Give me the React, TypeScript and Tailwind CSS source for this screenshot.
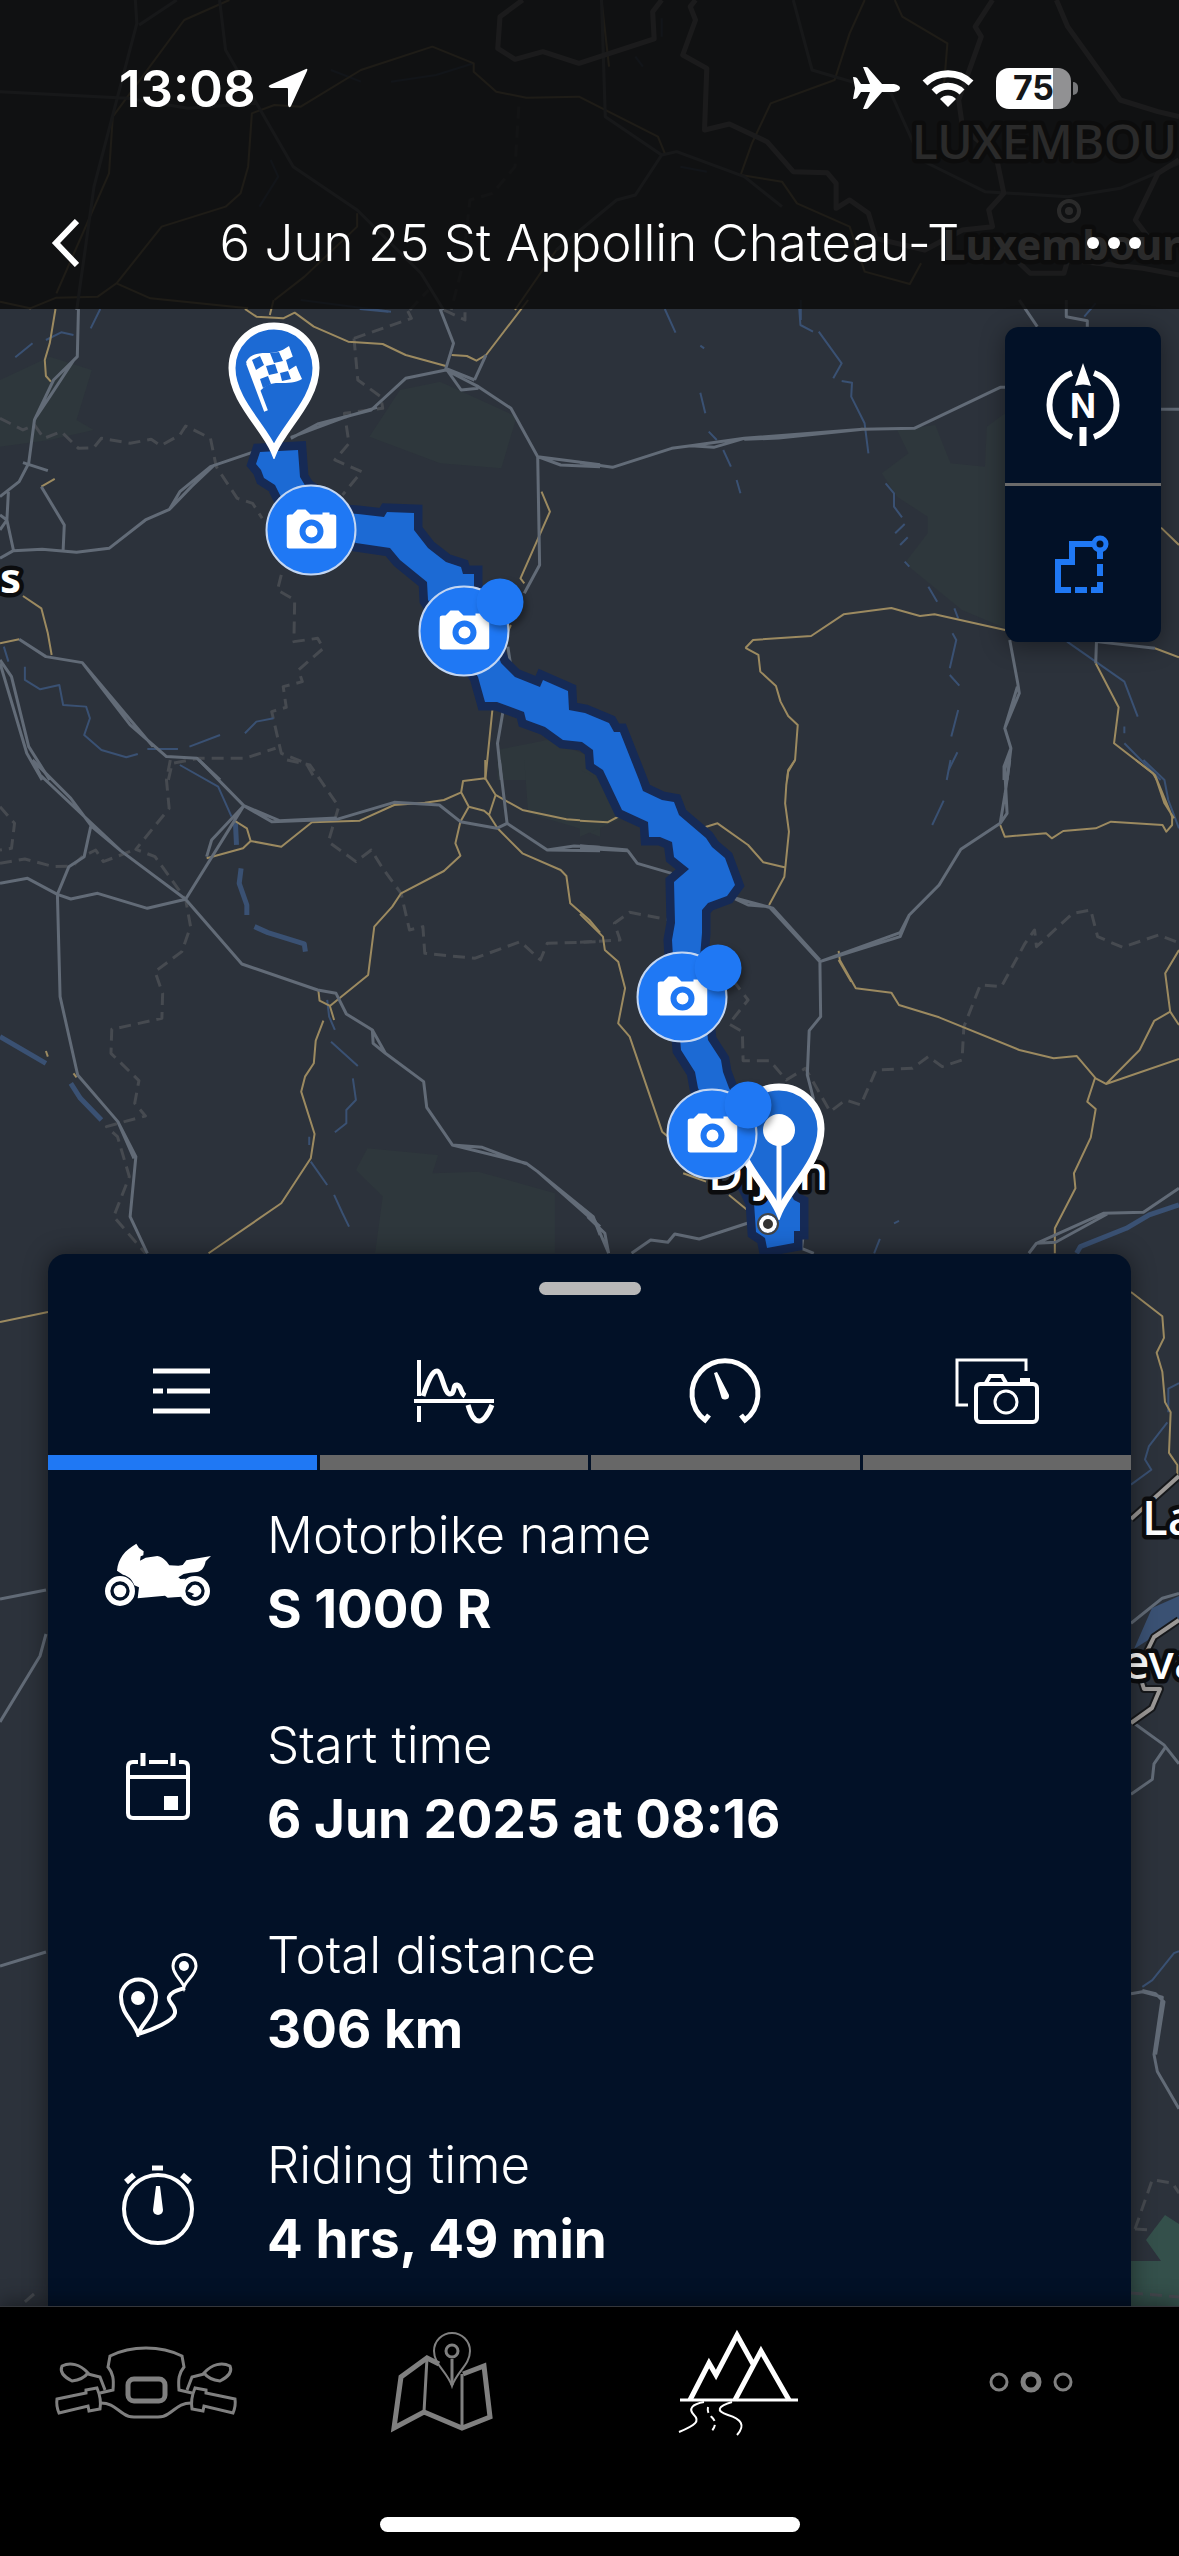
import { useState } from "react";
import type { ReactNode } from "react";

interface ITile {
  transform: string;
  woods?: string;
  rivers?: string;
  wideRivers?: string;
  borders?: string;
  roads?: string;
  nationals?: string;
  frontiers?: string;
}

// every tile keeps its own coordinate space, placed by its transform
const tiles: ITile[] = [
  {
    transform: "scale(0.7519 0.3333)",
    rivers:
      "M360 480 370 530 345 620M440 210 480 245M520 245 580 225 630 190M845 170 855 200M905 500 940 515M400 900 520 935M1065 900V960M880 55V110",
    borders: "M690 320 685 500 655 580 625 600 615 800 600 930M545 930 570 870",
    roads:
      "M180 0 182 70 125 560 102 930M292 0 300 150 390 500 475 630 560 820 590 930M0 275 170 295 250 325 340 310M235 0 185 75M1055 0 1080 210 1185 280 1225 480 1310 575 1420 590 1490 565 1568 490M800 0 805 350 880 465 845 585 820 600 740 750M880 465 900 455 990 530 1040 620",
    nationals:
      "M305 0 245 60 150 350 145 520 75 880M0 905 40 925 75 893 130 890 155 850 215 680 300 620 320 580 330 500 335 340 365 315 400 320 480 210 575 140 630 190 630 215 660 275 700 293 770 290 875 410 885 465M155 850 200 895 330 925M800 0 810 200M1150 0 1130 100 1110 240 1025 310 1000 430 985 525 1040 545 1060 610 1130 680 1150 815 1210 852 1225 790M1190 0 1200 50 1260 130 1255 270M740 750 685 930M405 830 365 900M475 640 475 680 405 830",
    frontiers:
      "M695 0 665 50 662 145 685 178 722 155 770 190 870 117 868 35 880 0M925 0 918 20 925 60 908 165 940 205 937 390 970 372 1020 425 1055 515 1100 518 1112 550 1112 625 1130 600 1155 640 1165 715 1230 750 1280 690 1320 680 1315 630 1335 580 1325 470 1280 380 1275 300 1305 110 1297 80 1320 0M1405 0 1420 80 1490 300 1540 335 1568 350M1568 480 1540 520 1510 660 1540 750M1340 755 1370 820 1415 820 1420 780 1520 805 1568 825",
  },
  {
    transform: "translate(0 300) scale(0.3827 0.3333)",
    woods:
      "M130 170 240 210 200 360 245 390 130 420 0 440V240ZM1045 270 1150 245 1350 350 1310 505 1150 490 965 410ZM1300 1350 1430 1320 1568 1380V1440H1300Z",
    rivers:
      "M262 27 237 85M85 130 40 172M120 120 160 97 192 105M940 27 1015 35M10 1040 22 1085M65 1100 65 1140 105 1168 155 1155 165 1215 225 1220 235 1255 220 1305 265 1350 330 1372 360 1362M385 1347 465 1347M495 1340 575 1305M640 1300 670 1265 715 1255",
    borders:
      "M0 355 60 390 90 375 115 415 160 395 205 445 245 443 265 415 340 430 395 418 420 437 470 405 485 378 550 415 565 500 620 595 660 610 685 655M735 825 725 870 770 900 768 1025 830 1015 845 1045 780 1110 790 1145 740 1160 748 1222 710 1235 735 1360 800 1390 825 1440M925 115 1075 55 1060 20M1160 30 1215 60V20M925 115 935 240 995 290 1000 325 900 340 912 430 875 480 945 515 895 585M440 1440 450 1390 520 1375 640 1375 720 1345",
    roads:
      "M205 27 202 170 140 240 90 360 75 490 50 545 0 590M193 180 130 290 95 350M60 488 125 512M108 560 168 675 165 750M0 775 35 752 110 748 200 757 285 745 380 660 443 628 470 575 550 500 665 455M443 628 500 560 560 495M760 415 830 372 970 330 1060 235 1165 210 1250 260 1335 325 1405 470 1410 795 1370 880M760 412 900 352 985 322M1150 27 1185 130 1165 205 1205 270 1250 265M1405 470 1465 495 1568 500M1405 470 1568 494M1240 240 1270 165M1165 205 1240 240M22 575 18 660 35 750M0 645 18 660 0 690M1327 1040 1335 1100M1315 1230 1300 1330 1310 1440M0 1080 30 1130 75 1340 130 1440M0 1090 70 1360 110 1440M50 1018 120 1070 215 1088 340 1275 435 1370 515 1375 575 1440M215 1088 330 1245 400 1340",
    nationals:
      "M145 27 130 130 117 180 120 228 133 245M640 27 670 50 740 55 770 38 820 80 910 125 1000 132 1060 165 1165 198M715 0 705 45M1380 0 1270 165 1245 182 1220 168 1180 165M143 537 108 560M60 888 108 925 125 1000 135 1065M0 1030 50 1018M1415 575 1437 635 1360 835 1370 850M1335 975 1325 1000M1287 1225 1268 1440",
  },
  {
    transform: "translate(580 300) scale(0.382 0.3333)",
    woods:
      "M790 520 860 460 830 390 930 375 970 490 1060 500 1065 380 1113 340V985L1000 930 850 790 910 700 910 650 830 590Z",
    rivers:
      "M222 27 250 98M574 27 577 75 610 95M625 95 685 190 663 235M685 243 712 248 710 290 745 370 755 460M315 278 328 340M337 395 358 420M375 450 395 500M410 540 420 580M800 550 822 580 822 620 843 652M850 672 825 700M858 712 838 735M850 785 862 800M912 860 935 905M980 925 990 955M975 1000 985 1020 968 1105M968 1125 993 1157M990 1230 972 1310M988 1357 965 1410M1275 1025 1425 1145 1460 1250M1425 1280V1300M1425 1330 1520 1440M1350 10 1320 50M315 137 325 145",
    roads:
      "M0 488 85 502 240 445 290 437 430 415 740 388 875 385 1100 262 1113 262M290 437 350 442 430 415M430 418 520 414 740 388M1150 0 1197 80M1273 0 1273 50 1328 62 1328 80M1521 328H1568M1125 1020 1146 1150 1150 1180 1112 1285 1128 1345 1118 1440M1145 1160 1112 1285M1128 1345 1110 1400V1440M1352 1025 1350 1090M1352 1025 1505 1045",
    nationals:
      "M433 1044 453 1020 605 1008 690 943 815 924 890 948 928 943 1113 990M433 1044 467 1065 472 1115 513 1158 525 1205 545 1248 570 1275 563 1380 545 1410 542 1440M1350 1090 1410 1222 1398 1330 1500 1420 1510 1440M1505 1045 1568 1072M1521 683 1568 735",
  },
  {
    transform: "translate(0 760) scale(0.3827 0.3333)",
    woods:
      "M960 1165 1145 1185 1130 1240 1250 1235 1450 1300V1480H980L1000 1310 930 1230ZM1370 0H1568V230L1500 200 1380 160Z",
    rivers:
      "M470 15 570 80 605 170M855 720 860 770 875 810M865 845 935 918M922 955 930 1020 905 1050 905 1090 875 1117M808 1130V1155M812 1205 855 1275M873 1305 895 1360 912 1400",
    wideRivers:
      "M615 185 618 255M630 325 625 370 645 435 645 465M665 500 700 518 795 552 798 575M0 830 120 910M185 970 210 1015 265 1080",
    borders:
      "M445 0 435 60 442 145 355 268 405 290 485 418 498 500 475 575 405 635 425 700 423 775 292 808 290 880 363 962 352 1030 380 1068 278 1100 307 1130 338 1250 297 1370 380 1480M0 310 65 297 140 320 190 318 215 290 250 270 270 305 350 270M0 140 38 190 30 265 0 270M750 0 810 15 885 140 858 245 930 305 970 270 1000 325 1048 400 1070 510 1105 500 1110 580 1240 595 1360 545 1412 600 1430 550 1568 545",
    roads:
      "M85 0 105 45 315 272 485 418 632 612 830 690 878 700 905 762 973 810 975 850 1007 880 1107 965 1115 1042 1182 1155 1375 1210 1405 1235 1550 1370 1568 1425M85 0 185 115 240 200 315 272M973 810 1007 880M1405 1235 1568 1400M1182 1155 1260 1162 1375 1212M520 0 637 137 710 185 880 178 1030 127 1148 135 1203 185 1298 205 1325 190 1430 270 1568 272M637 137 730 182 880 174M1430 270 1500 258 1568 262M1305 0 1325 190M637 137 485 418M637 137 553 240 540 290M485 418 385 445 255 400 185 417 150 403 72 355 0 370M150 403 180 320 220 290 237 200M150 403 157 710 203 945 308 1085 355 1190 340 1370 385 1480M308 1085 350 1195",
    nationals:
      "M1268 0 1268 55 1210 63 1205 97 1225 140 1265 152 1278 165 1300 205 1365 280 1465 330 1480 348 1490 430 1540 480 1568 518M1268 55 1295 105 1278 165M1295 105 1365 150 1480 178 1568 185M1205 97 1160 120 1110 128 1030 135 940 182 815 187 735 260 655 243 635 265 540 295M610 180 645 205 655 243M1225 140 1203 185 1190 250 1203 287 1160 333 1048 400 1025 440 978 500 962 645 862 738 835 722 832 692M862 738 873 780M845 782 825 842 820 910 797 950 787 995 822 1122 812 1195 735 1330 545 1480M120 873 125 890M192 940 200 952",
  },
  {
    transform: "translate(580 760) scale(0.382 0.3333)",
    woods: "M0 30 60 60 120 170 0 230Z",
    rivers:
      "M970 0 960 60M952 122 922 195M1475 0 1530 60 1540 120 1568 205M785 1437 770 1480M835 1383 822 1390",
    wideRivers: "M1568 1335 1490 1365 1430 1405 1310 1460 1300 1480",
    borders:
      "M0 547 105 540 90 490 130 457 235 480M400 660 440 720 390 792 425 815 427 902 497 902 540 960 590 925 655 1055 695 1020 735 1035 775 930 870 925 912 890 948 920 1000 900 1005 800 1048 675 1103 680 1165 550 1190 510 1195 560 1290 460 1337 450 1355 530 1420 562 1515 525 1560 545",
    roads:
      "M0 265 125 272 150 310 240 340M0 257 125 270M398 412 440 435 495 440 628 605 630 770 600 812 595 945 612 1020M398 412 505 445 628 600M628 605 838 530 862 465 940 375 997 268 1100 190 1118 160 1112 30 1118 0M628 605 838 518 862 465M1100 190 1113 100 1125 0M1175 1480 1195 1450 1370 1360 1475 1357 1568 1285M1195 1450 1245 1447 1380 1362M135 1480 185 1440 230 1447 248 1422 312 1437 438 1390M0 1340 40 1385 75 1480M20 1370 65 1420 75 1480M585 1420 580 1465 612 1480",
    nationals:
      "M563 0 545 35 540 75 537 130 547 215 535 350 495 435M318 205 360 190 440 255 480 307 535 322M0 182 72 187 108 165M1455 0 1505 45 1550 170 1550 195 1535 215 1525 195 1390 185 1350 205 1265 213 1235 235 1220 220 1112 230 1100 195M1505 45 1530 130 1555 175M677 573 680 600 722 685 815 698 835 735 940 772 1150 870 1240 895 1300 888 1350 955 1377 972 1568 897M677 600 710 665M1377 972 1465 870 1503 783 1545 755 1532 640 1568 570M1545 755 1568 795M1348 955 1328 1025 1350 1047 1337 1133 1293 1240 1297 1285 1243 1405 1243 1480M0 462 60 530 65 570 100 605 118 685 100 790 130 830 215 1115 235 1135M270 1240 330 1265M390 1305 438 1350",
  },
  {
    transform: "translate(1099 1250) scale(0.3333 0.6761)",
    rivers:
      "M240 197 208 205 208 240M205 255 150 290 138 310 157 325 96 347M130 1090 160 1080 225 1040 240 1037",
    borders:
      "M108 1448 160 1375 220 1380 240 1395M108 1448 225 1452 240 1475",
    roads:
      "M96 552 190 515 240 508M105 700 195 732 240 760M200 735 165 760 160 783 96 805M96 1100 130 1097 190 1105 165 1190 175 1215 240 1270M130 1095 170 1100 195 1112 170 1190",
    nationals:
      "M96 62 190 98 195 130 173 152 190 180 198 225 215 240 210 300 235 318 235 335",
  },
  {
    transform: "translate(0 1254)",
    borders: "M34 1040 20 1052",
    roads: "M0 345 46 336M0 468 40 402 46 380M0 712 46 698",
    nationals: "M0 68 48 58",
  },
];

const routePath =
  "M260 452 298 450 300 477 306 487 344 513 358 514 384 517 387 512 414 513 414 530 428 548 446 562 461 567 463 574 474 574 474 587 501 663 515 677 540 687 543 680 568 691 569 710 585 713 609 723 614 732 620 732 639 780 643 791 662 800 674 802 679 815 706 838 712 847 725 858 735 885 727 896 708 903 702 910 702 933 700 957 708 1040 721 1060 723 1072 729 1088 794 1200 800 1203 800 1231 794 1231 794 1243 767 1248 765 1238 756 1232 754 1203 748 1190 698 1088 695 1072 681 1050 673 957 672 940 675 923 674 882 689 869 674 857 672 842 660 837 649 837 648 822 622 810 603 770 594 764 593 750 582 742 563 740 545 727 526 720 524 712 497 702 485 702 478 677 428 600 427 582 400 560 390 548 356 543 281 497 275 485 264 478 261 470 256 464Z";

const photos = [
  { id: 1, x: 311, y: 530, group: false },
  { id: 2, x: 464, y: 631, group: true },
  { id: 3, x: 682, y: 997, group: true },
  { id: 4, x: 712, y: 1134, group: true },
];

const place = (x: number, y: number) => ({
  left: `${(x / 1179) * 100}%`,
  top: `${(y / 2556) * 100}%`,
});

const Tile = ({ tile }: { tile: ITile }) => (
  <g transform={tile.transform} fill="none" strokeLinejoin="round">
    <path d={tile.woods} fill="#2e373c" />
    <path d={tile.borders} stroke="#464a50" strokeWidth="3" strokeDasharray="12 7" vectorEffect="non-scaling-stroke" />
    <path d={tile.rivers} stroke="#3a5173" strokeWidth="2" vectorEffect="non-scaling-stroke" />
    <path d={tile.wideRivers} stroke="#3a5173" strokeWidth="5" vectorEffect="non-scaling-stroke" />
    <path d={tile.nationals} stroke="#9c8a60" strokeWidth="2" vectorEffect="non-scaling-stroke" />
    <path d={tile.roads} stroke="#626b77" strokeWidth="3" vectorEffect="non-scaling-stroke" />
    <path d={tile.frontiers} stroke="#85868a" strokeWidth="5" vectorEffect="non-scaling-stroke" />
  </g>
);

const MapView = () => (
  <div className="absolute inset-0 overflow-hidden bg-[#2c323b]">
    <svg
      className="h-full w-full"
      viewBox="0 0 1179 2556"
      preserveAspectRatio="xMidYMid slice"
      aria-label="Map of the ride"
    >
      {tiles.map((tile, i) => (
        <Tile key={i} tile={tile} />
      ))}

      {/* lake and motorways near Geneva */}
      <path d="M1134 1649 1152 1608 1179 1596V1625L1156 1635Z" fill="#3a5173" />
      <path d="M1131 2261H1161L1146 2240 1165 2215 1179 2224V2306H1131Z" fill="#34504b" />
      <path d="M1131 2293 1179 2297" stroke="#464a50" strokeWidth="3" strokeDasharray="12 7" />
      <g fill="none" strokeLinejoin="round">
        <path d="M1131 1519 1179 1476M1179 1620 1154 1637 1138 1670 1144 1689H1160L1152 1708 1131 1723" stroke="#16181b" strokeWidth="8" />
        <path d="M1131 1519 1179 1476M1179 1620 1154 1637 1138 1670 1144 1689H1160L1152 1708 1131 1723" stroke="#9b9896" strokeWidth="4" />
      </g>

      <path d={routePath} fill="#162a55" stroke="#162a55" strokeWidth="17" />
      <path d={routePath} fill="#1c6ad4" />

      <circle cx="1069" cy="211" r="10" fill="none" stroke="#fff" strokeWidth="4" />
      <circle cx="1069" cy="211" r="4" fill="#fff" />
      <circle cx="768" cy="1224" r="7" fill="#333" stroke="#fff" strokeWidth="4" />
      <circle cx="768" cy="1224" r="10" fill="none" stroke="#444" strokeWidth="2" />

      <g
        className="font-['Noto_Sans',sans-serif] text-[48px] font-medium"
        fill="#fff"
        stroke="#0b0c0e"
        strokeWidth="9"
        strokeLinejoin="round"
        paintOrder="stroke"
      >
        <text x="912" y="159">LUXEMBOU</text>
        <text x="942" y="260" className="text-[42px] font-bold">Luxembourg</text>
        <text x="0" y="593" className="text-[42px] font-bold">s</text>
        <text x="708" y="1190">Dijon</text>
        <text x="1142" y="1535">La</text>
        <text x="1122" y="1679">eva</text>
      </g>
    </svg>

    <svg
      className="absolute h-[137px] w-[92px] -translate-x-1/2 -translate-y-full"
      style={place(274, 459)}
      viewBox="0 0 92 137"
      aria-label="Finish"
    >
      <path d="M46 129C36 105 4 78 4 46a42 42 0 0 1 84 0C88 78 56 105 46 129Z" fill="#1c6ad4" stroke="#fff" strokeWidth="7" />
      <path d="M20 41 38 89" stroke="#fff" strokeWidth="4" />
      <path d="M18 40C22 33 28 31 38 31S52 30 61 24C65 35 69 47 74 57 68 61 60 61 51 61S38 63 32 69Z" fill="#fff" />
      <path d="M24 38 32 34 36 43 28 48ZM42 31 51 30 55 39 46 41ZM38 44 47 42 50 51 41 53ZM58 38 66 34 69 43 61 48ZM52 51 60 49 63 57 54 59ZM32 57 40 54 43 62 35 66Z" fill="#1c6ad4" />
    </svg>
    <svg
      className="absolute h-[137px] w-[92px] -translate-x-1/2 -translate-y-full"
      style={place(779, 1220)}
      viewBox="0 0 92 137"
      aria-label="Start"
    >
      <path d="M46 129C36 105 4 78 4 46a42 42 0 0 1 84 0C88 78 56 105 46 129Z" fill="#1c6ad4" stroke="#fff" strokeWidth="7" />
      <circle cx="46" cy="47" r="16" fill="#fff" />
      <path d="M46 47V128" stroke="#fff" strokeWidth="5" />
    </svg>

    {photos.map((photo) => (
      <button
        key={photo.id}
        aria-label={`Photos ${photo.id}`}
        className="absolute flex h-[91px] w-[91px] -translate-x-1/2 -translate-y-1/2 items-center justify-center rounded-full border-2 border-[#c3d6f2] bg-[#1f78f4]"
        style={place(photo.x, photo.y)}
      >
        <svg className="h-[50px] w-[50px]" viewBox="0 0 50 50">
          <path d="M3 9H6L11 4H19L24 9H36V7H43V9H47Q50 9 50 12V40Q50 43 47 43H3Q0 43 0 40V12Q0 9 3 9Z" fill="#fff" />
          <circle cx="25" cy="26" r="9" fill="#fff" stroke="#1f78f4" strokeWidth="6" />
        </svg>
        {photo.group && (
          <span className="absolute -top-[9px] left-[56px] h-[47px] w-[47px] rounded-full bg-[#1f78f4] shadow-[3px_4px_6px_rgba(0,0,0,0.35)]" />
        )}
      </button>
    ))}
  </div>
);

const StatusBar = () => (
  <div className="flex h-[176px] items-center justify-between pr-[101px] pl-[119px]">
    <div className="flex items-center gap-3">
      <span className="text-[51px] leading-none font-semibold">13:08</span>
      <svg className="h-10 w-10" viewBox="0 0 40 40" fill="#fff">
        <path d="M38 1Q40 0 39 3L23 38Q21 41 20 37V21Q20 20 19 20H3Q-1 19 2 17Z" />
      </svg>
    </div>
    <div className="flex items-center gap-[22px]">
      <svg className="h-[42px] w-12" viewBox="0 0 48 42" fill="#fff">
        <path d="M42 17C46 18 48 19 48 21S46 24 42 25H30L17 40Q16 42 14 42H11L18 25H9L5 31Q4 32 1 32L3 21 1 10Q4 10 5 11L9 17H18L11 0H14Q16 0 17 2L30 17Z" />
      </svg>
      <svg className="h-[38px] w-[52px]" viewBox="0 0 52 38" fill="none" stroke="#fff" strokeWidth="7">
        <path d="M3 14A33 33 0 0 1 49 14" />
        <path d="M12 23A20 20 0 0 1 40 23" />
        <path d="M26 38 18 30A11 11 0 0 1 34 30Z" fill="#fff" stroke="none" />
      </svg>
      <div className="flex items-center gap-[2px]">
        <div className="flex h-[41px] w-[75px] items-center justify-center rounded-[13px] bg-linear-to-r from-white from-76% to-[#919193] to-76% text-[34px] leading-none font-bold text-[#151618]">
          75
        </div>
        <span className="h-[13px] w-[5px] rounded-r-full bg-[#77787a]" />
      </div>
    </div>
  </div>
);

const MapControls = () => (
  <div className="flex w-[156px] flex-col overflow-hidden rounded-[14px] bg-[#021127] shadow-[0_4px_24px_rgba(0,0,0,0.4)]">
    <button className="flex h-[156px] items-center justify-center" aria-label="North up">
      <svg className="h-[90px] w-[90px]" viewBox="-45 -45 90 90">
        <path d="M-11 -32A34 34 0 0 0 -11 32M11 -32A34 34 0 0 1 11 32" fill="none" stroke="#fff" strokeWidth="6" />
        <path d="M0 -42 8 -19Q0 -22 -8 -19Z" fill="#fff" />
        <path d="M0 22V41" stroke="#fff" strokeWidth="7" />
        <text x="0" y="13" textAnchor="middle" className="text-[34px] font-bold" fill="#fff">
          N
        </text>
      </svg>
    </button>
    <hr className="border-t-3 border-[#6a6a6a]" />
    <button className="flex h-[156px] items-center justify-center" aria-label="Fit route">
      <svg className="h-[90px] w-[90px]" viewBox="-45 -45 90 90" fill="none" stroke="#1f78f4" strokeWidth="6">
        <circle cx="17" cy="-20" r="6" strokeWidth="5" />
        <path d="M10 -20H-11V-2H-25V26H-12M-8 26H4M8 26H17V18M17 12V0M17 -5V-14" />
      </svg>
    </button>
  </div>
);

interface IIcon {
  label: string;
  icon: ReactNode;
}

const tabs: IIcon[] = [
  {
    label: "Details",
    icon: <path d="M21 20H78M21 40H31M35 40H78M21 60H78" strokeWidth="5" />,
  },
  {
    label: "Elevation",
    icon: (
      <>
        <path d="M15 9V45M15 55V71M10 50H90" />
        <path d="M19 45C24 30 28 20 33 20S40 43 46 43 48 33 53 34 56 42 61 45M64 54C67 65 71 70 75 70S84 64 88 54" strokeWidth="5" />
      </>
    ),
  },
  {
    label: "Speed",
    icon: (
      <>
        <path d="M34 64 30 69A33 33 0 1 1 70 69L66 64" strokeWidth="5" />
        <path d="M39 22 46 45A4 4 0 1 0 54 44L42 21Z" fill="#fff" stroke="none" />
      </>
    ),
  },
  {
    label: "Photos",
    icon: (
      <>
        <path d="M21 54H10V9H79V20" strokeWidth="3" />
        <rect x="29" y="33" width="61" height="38" rx="4" />
        <path d="M39 32 43 25H55L59 32M73 29H83" />
        <circle cx="59" cy="51" r="11" strokeWidth="3" />
      </>
    ),
  },
];

interface IDetail extends IIcon {
  value: string;
  viewBox: string;
}

const details: IDetail[] = [
  {
    label: "Motorbike name",
    value: "S 1000 R",
    viewBox: "9 -9 360 270",
    icon: (
      <g stroke="none" fill="#fff">
        <path d="M66 122C70 85 88 62 124 41L132 54 146 64 145 76 137 79 135 92 152 83 187 78C204 82 214 92 223 106L250 107 263 105 274 91 348 78 332 94C328 116 318 126 300 127L285 128 266 132 250 142 256 147 272 146 258 176 272 192 262 200 238 202 218 203 210 197 128 205 132 172 118 166C112 148 100 138 84 134Z" />
        <circle cx="75" cy="183" r="37" fill="none" stroke="#fff" strokeWidth="16" />
        <circle cx="75" cy="183" r="19" />
        <circle cx="300" cy="183" r="37" fill="none" stroke="#fff" strokeWidth="16" />
        <path d="M293 166A18 18 0 1 1 290 197L298 192 277 184Z" />
      </g>
    ),
  },
  {
    label: "Start time",
    value: "6 Jun 2025 at 08:16",
    viewBox: "0 0 120 90",
    icon: (
      <>
        <path d="M40 25H35Q30 25 30 30V76Q30 81 35 81H85Q90 81 90 76V30Q90 25 85 25H81M51 25H70M30 40H90" />
        <path d="M45 16V29M75 16V29" strokeWidth="5" />
        <rect x="66" y="59" width="14" height="14" fill="#fff" stroke="none" />
      </>
    ),
  },
  {
    label: "Total distance",
    value: "306 km",
    viewBox: "0 0 120 90",
    icon: (
      <>
        <path d="M40 87C36 74 23 67 23 50A17 17 0 0 1 58 50C58 67 45 74 40 87ZM40 87C54 83 76 74 77 66S69 55 71 50 77 44 87 41" />
        <path d="M86 40C84 33 75 28 75 19A11 11 0 0 1 98 19C98 28 88 33 86 40Z" strokeWidth="3" />
        <circle cx="40" cy="51" r="7" fill="#fff" stroke="none" />
        <circle cx="86" cy="19" r="5" fill="#fff" stroke="none" />
      </>
    ),
  },
  {
    label: "Riding time",
    value: "4 hrs, 49 min",
    viewBox: "0 0 120 90",
    icon: (
      <>
        <circle cx="60" cy="52" r="34" />
        <path d="M54 11H65" strokeWidth="5" />
        <path d="M28 25 36 18M92 25 84 18" strokeWidth="6" />
        <path d="M58 29H62L65 53A5 5 0 1 1 55 53Z" fill="#fff" stroke="none" />
      </>
    ),
  },
];

const HalfBike = () => (
  <>
    <path d="M94 21C80 21 68 24 58 29L56 40C61 46 62 52 61 63L48 66M36 47 48 50 53 63M49 76C60 76 64 82 72 87Q76 90 82 90H94" />
    <path d="M36 46C28 37 18 35 10 39 7 46 14 51 20 54 28 53 33 50 36 46Z" />
    <path d="M5 72 34 66V63L45 61C48 68 49 76 48 82L37 84 36 79 7 86Q4 79 5 72Z" />
  </>
);

const navItems: IIcon[] = [
  {
    label: "Cockpit",
    icon: (
      <g strokeWidth="3">
        <HalfBike />
        <g transform="translate(188) scale(-1 1)">
          <HalfBike />
        </g>
        <rect x="76" y="52" width="37" height="22" rx="6" strokeWidth="5" />
      </g>
    ),
  },
  {
    label: "Map",
    icon: (
      <>
        <path d="M92 37 80 31 54 50 47 101 77 85 115 101 143 90 137 39 116 47" strokeWidth="5" />
        <path d="M80 31 77 85M115 47V101M105 32V58" strokeWidth="3" />
        <path d="M105 59C100 44 87 38 87 24A18 18 0 0 1 123 24C123 38 110 44 105 59Z" strokeWidth="2" />
        <circle cx="105" cy="24" r="6" strokeWidth="3" />
      </>
    ),
  },
  {
    label: "Rides",
    icon: (
      <>
        <path d="M38 73H156" strokeWidth="3" />
        <path d="M48 73 67 36 74 48 95 8 111 37M93 73 119 24 147 73" strokeWidth="5" />
        <path d="M62 75C50 77 46 82 52 88S54 98 37 105M90 75C76 79 73 84 86 88S104 98 95 108" strokeWidth="2" />
        <path d="M66 80C64 89 73 90 73 96S70 103 69 105" strokeWidth="2" strokeDasharray="6 4" />
      </>
    ),
  },
  {
    label: "More",
    icon: (
      <>
        <circle cx="62" cy="55" r="8" strokeWidth="3" />
        <circle cx="94" cy="55" r="8" strokeWidth="5" />
        <circle cx="126" cy="55" r="8" strokeWidth="3" />
      </>
    ),
  },
];

const App = () => {
  const [tab, setTab] = useState<number>(0);
  const [page, setPage] = useState<number>(2);

  return (
    <div className="relative flex min-h-screen flex-col font-['Inter',sans-serif] text-white">
      <MapView />

      <header className="relative bg-[#0c0c0d]/88">
        <StatusBar />
        <div className="flex h-[133px] items-center">
          <button className="flex h-full w-[130px] items-center justify-center" aria-label="Back">
            <svg className="h-12 w-7" viewBox="0 0 28 48" fill="none" stroke="#fff" strokeWidth="6">
              <path d="M26 2 5 24 26 46" />
            </svg>
          </button>
          <h1 className="flex-1 text-center text-[51px] leading-none font-light whitespace-nowrap">
            6 Jun 25 St Appollin Chateau-T
          </h1>
          <button className="flex h-full w-[130px] items-center justify-center" aria-label="Options">
            <svg className="h-4 w-14" viewBox="0 0 56 16" fill="#fff">
              <circle cx="7" cy="8" r="6" />
              <circle cx="28" cy="8" r="6" />
              <circle cx="49" cy="8" r="6" />
            </svg>
          </button>
        </div>
      </header>

      <main className="relative flex flex-1 flex-col justify-between">
        <div className="flex justify-end pt-[18px] pr-[18px]">
          <MapControls />
        </div>

        <section className="mx-12 overflow-hidden rounded-t-[18px] bg-[#021127] shadow-[0_0_24px_rgba(0,0,0,0.45)]">
          <div className="flex justify-center pt-7">
            <span className="h-[13px] w-[102px] rounded-full bg-[#b8b8b8]" />
          </div>
          <div className="grid grid-cols-4 gap-[3px]">
            {tabs.map((item, i) => (
              <button key={item.label} aria-label={item.label} onClick={() => setTab(i)}>
                <span className="flex h-[160px] items-end justify-center pb-6">
                  <svg className="h-20 w-[100px]" viewBox="0 0 100 80" fill="none" stroke="#fff" strokeWidth="4">
                    {item.icon}
                  </svg>
                </span>
                <span className={tab === i ? "block h-[15px] bg-[#1f78f4]" : "block h-[15px] bg-[#676767]"} />
              </button>
            ))}
          </div>
          <dl className="flex flex-col gap-[60px] pt-[27px] pb-[29px]">
            {details.map((item) => (
              <div key={item.label} className="grid grid-cols-[219px_1fr] items-center">
                <svg
                  className="row-span-2 h-[90px] w-[120px] justify-self-center"
                  viewBox={item.viewBox}
                  fill="none"
                  stroke="#fff"
                  strokeWidth="4"
                >
                  {item.icon}
                </svg>
                <dt className="text-[51px] leading-[75px] font-light">{item.label}</dt>
                <dd className="text-[53px] leading-[75px] font-bold">{item.value}</dd>
              </div>
            ))}
          </dl>
        </section>
      </main>

      <nav className="relative border-t border-[#33363b] bg-black pt-5 pb-6 shadow-[0_-4px_20px_rgba(0,0,0,0.4)]">
        <div className="grid grid-cols-4">
          {navItems.map((item, i) => (
            <button
              key={item.label}
              aria-label={item.label}
              onClick={() => setPage(i)}
              className={page === i ? "flex justify-center text-white" : "flex justify-center text-[#808080]"}
            >
              <svg className="h-[110px] w-[190px]" viewBox="0 0 190 110" fill="none" stroke="currentColor">
                {item.icon}
              </svg>
            </button>
          ))}
        </div>
        <div className="mx-auto mt-20 h-[15px] w-[420px] rounded-full bg-white" />
      </nav>
    </div>
  );
};

export default App;
